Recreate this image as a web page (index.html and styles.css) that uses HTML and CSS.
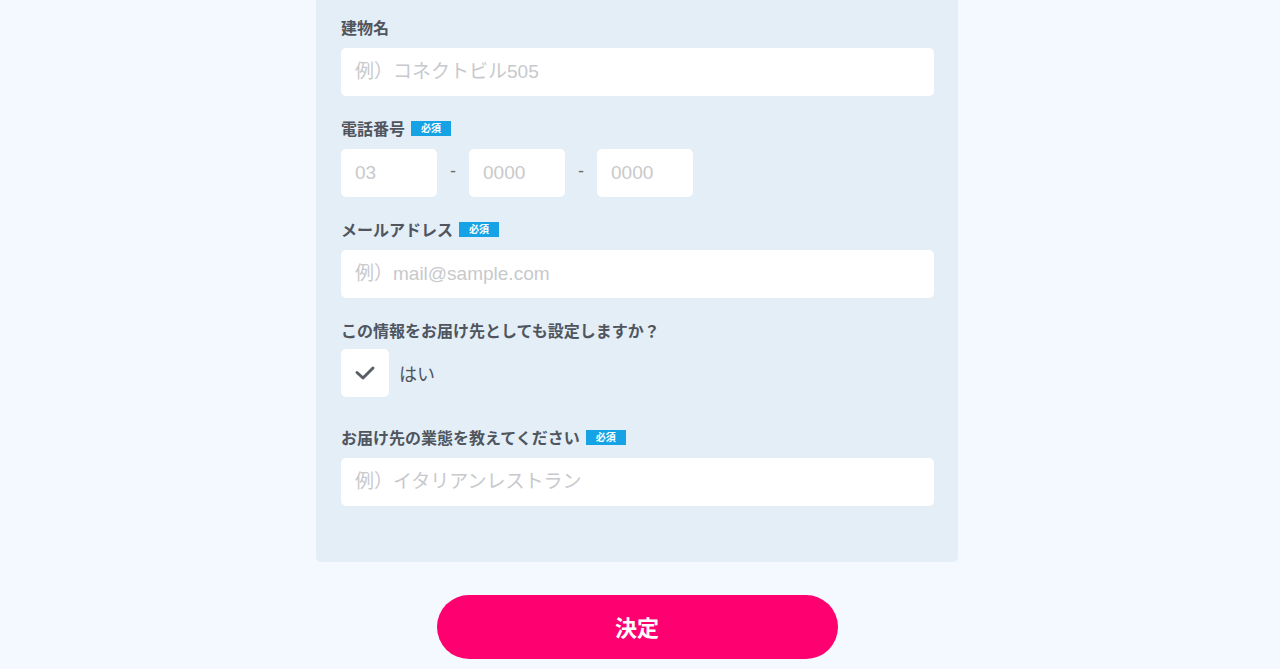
FILE: index.html
```html
<!DOCTYPE html>
<html>
<head lang="ja">
    <meta charset="UTF-8">
    <title>お届け先情報</title>
    <link rel="stylesheet" href="styles.css">
</head>
<body>
<div id="wrap">
    <form id="panel">
        <div class="group">
            <label class="label">建物名</label>
            <input class="field" type="text" placeholder="例）コネクトビル505">
        </div>

        <div class="group">
            <label class="label">電話番号 <span class="req">必須</span></label>
            <div class="tel-row">
                <input class="field tel" type="text" placeholder="03">
                <span class="dash">-</span>
                <input class="field tel" type="text" placeholder="0000">
                <span class="dash">-</span>
                <input class="field tel" type="text" placeholder="0000">
            </div>
        </div>

        <div class="group">
            <label class="label">メールアドレス <span class="req">必須</span></label>
            <input class="field" type="text" placeholder="例）mail@sample.com">
        </div>

        <div class="group check-group">
            <label class="label label-tight">この情報をお届け先としても設定しますか？</label>
            <div class="check-row">
                <span class="check-box">
                    <svg width="22" height="16" viewBox="0 0 22 16">
                        <path d="M3 7.5 L9 13 L19 3" fill="none" stroke="#5a5e66" stroke-width="3" stroke-linecap="round" stroke-linejoin="round"/>
                    </svg>
                </span>
                <span class="check-txt">はい</span>
            </div>
        </div>

        <div class="group last">
            <label class="label">お届け先の業態を教えてください <span class="req">必須</span></label>
            <input class="field" type="text" placeholder="例）イタリアンレストラン">
        </div>
    </form>

    <div id="submit-box">
        <button id="submit" type="button">決定</button>
    </div>
</div>
</body>
</html>
```

FILE: styles.css
```css
*{
    margin: 0;
    padding: 0;
    box-sizing: border-box;
}
body{
    background: #f3f9fe;
    font-family: "Liberation Sans", "Noto Sans CJK JP", sans-serif;
    color: #50555e;
}
#wrap{
    width: 1274px;
}
#panel{
    display: block;
    width: 642px;
    margin: 0 auto;
    padding: 17px 24px 56px 25px;
    background: #e3eef7;
    border-radius: 0 0 5px 5px;
}
.group{
    margin-bottom: 22px;
}
.group.check-group{
    margin-bottom: 30px;
}
.group.last{
    margin-bottom: 0;
}
.label{
    display: flex;
    align-items: center;
    height: 20px;
    margin-bottom: 11px;
    font-size: 16px;
    font-weight: bold;
    color: #50555e;
}
.label-tight{
    margin-bottom: 9px;
}
.req{
    display: inline-block;
    width: 40px;
    height: 15px;
    margin-left: 6px;
    line-height: 15px;
    background: #15a3e6;
    color: #fff;
    font-size: 10px;
    font-weight: bold;
    text-align: center;
}
.field{
    display: block;
    width: 100%;
    height: 48px;
    padding: 0 14px;
    border: none;
    border-radius: 5px;
    background: #fff;
    font-family: "Liberation Sans", "Noto Sans CJK JP", sans-serif;
    font-size: 19px;
    color: #50555e;
    outline: none;
}
.field::placeholder{
    color: #c7c9cc;
}
.tel-row{
    display: flex;
    align-items: center;
}
.field.tel{
    width: 96px;
}
.dash{
    width: 32px;
    text-align: center;
    font-size: 18px;
    color: #6a6e75;
    margin-top: -4px;
}
.check-row{
    display: flex;
    align-items: center;
}
.check-box{
    display: flex;
    align-items: center;
    justify-content: center;
    width: 48px;
    height: 48px;
    background: #fff;
    border-radius: 5px;
}
.check-txt{
    margin-left: 10px;
    font-size: 18px;
    color: #50555e;
}
#submit-box{
    display: flex;
    justify-content: center;
    padding-top: 33px;
}
#submit{
    width: 401px;
    height: 64px;
    padding-bottom: 3px;
    border: none;
    border-radius: 32px;
    background: #fe0070;
    color: #fff;
    font-family: "Liberation Sans", "Noto Sans CJK JP", sans-serif;
    font-size: 22px;
    font-weight: bold;
    cursor: pointer;
}
```
